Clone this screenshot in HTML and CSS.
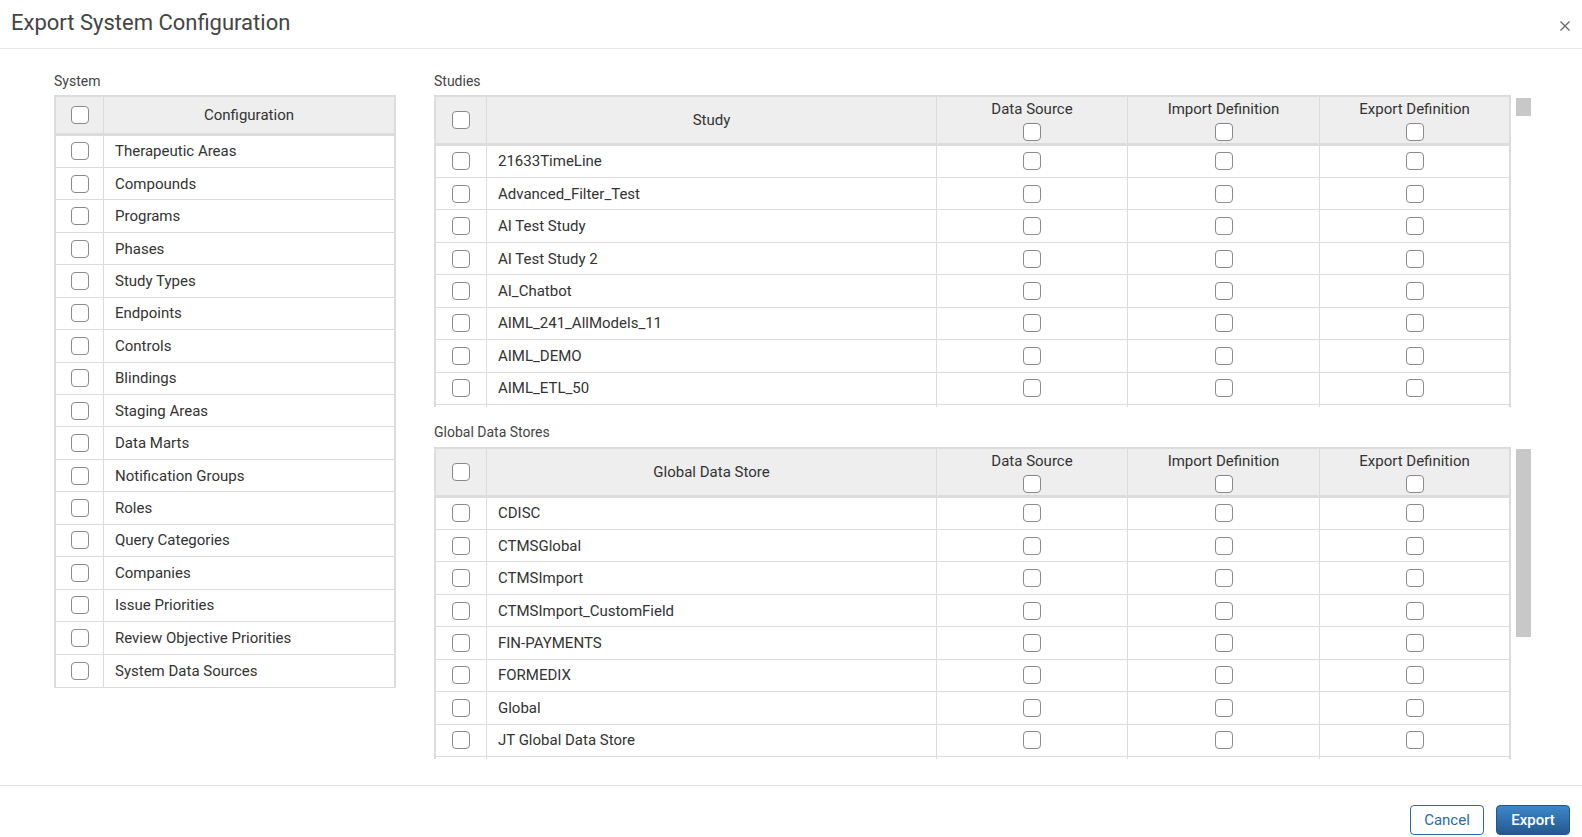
FILE: index.html
```html
<!DOCTYPE html>
<html lang="en">
<head>
    <meta charset="UTF-8">
    <meta name="viewport" content="width=device-width, initial-scale=1.0">
    <title>Export System Configuration</title>
    <link rel="stylesheet" href="styles.css">
</head>
<body>
    <div class="modal">
        <div class="modal-header">
            <h1 class="modal-title">Export System Configuration</h1>
            <button class="close-btn" title="Close">
                <svg width="10" height="10" viewBox="0 0 10 10"><path d="M0.5 0.5 L9.5 9.5 M9.5 0.5 L0.5 9.5" stroke="#666" stroke-width="1.3" fill="none"/></svg>
            </button>
        </div>

        <div class="modal-body">
            <!-- System column -->
            <div class="system-col">
                <div class="section-label">System</div>
                <div class="grid-table system-table">
                    <div class="grid-row head">
                        <div class="cell cb"><input type="checkbox"></div>
                        <div class="cell title">Configuration</div>
                    </div>
                    <div class="grid-row"><div class="cell cb"><input type="checkbox"></div><div class="cell name">Therapeutic Areas</div></div>
                    <div class="grid-row"><div class="cell cb"><input type="checkbox"></div><div class="cell name">Compounds</div></div>
                    <div class="grid-row"><div class="cell cb"><input type="checkbox"></div><div class="cell name">Programs</div></div>
                    <div class="grid-row"><div class="cell cb"><input type="checkbox"></div><div class="cell name">Phases</div></div>
                    <div class="grid-row"><div class="cell cb"><input type="checkbox"></div><div class="cell name">Study Types</div></div>
                    <div class="grid-row"><div class="cell cb"><input type="checkbox"></div><div class="cell name">Endpoints</div></div>
                    <div class="grid-row"><div class="cell cb"><input type="checkbox"></div><div class="cell name">Controls</div></div>
                    <div class="grid-row"><div class="cell cb"><input type="checkbox"></div><div class="cell name">Blindings</div></div>
                    <div class="grid-row"><div class="cell cb"><input type="checkbox"></div><div class="cell name">Staging Areas</div></div>
                    <div class="grid-row"><div class="cell cb"><input type="checkbox"></div><div class="cell name">Data Marts</div></div>
                    <div class="grid-row"><div class="cell cb"><input type="checkbox"></div><div class="cell name">Notification Groups</div></div>
                    <div class="grid-row"><div class="cell cb"><input type="checkbox"></div><div class="cell name">Roles</div></div>
                    <div class="grid-row"><div class="cell cb"><input type="checkbox"></div><div class="cell name">Query Categories</div></div>
                    <div class="grid-row"><div class="cell cb"><input type="checkbox"></div><div class="cell name">Companies</div></div>
                    <div class="grid-row"><div class="cell cb"><input type="checkbox"></div><div class="cell name">Issue Priorities</div></div>
                    <div class="grid-row"><div class="cell cb"><input type="checkbox"></div><div class="cell name">Review Objective Priorities</div></div>
                    <div class="grid-row"><div class="cell cb"><input type="checkbox"></div><div class="cell name">System Data Sources</div></div>
                </div>
            </div>

            <!-- Studies and global data stores -->
            <div class="data-col">
                <div class="section-label">Studies</div>
                <div class="scroll-area">
                    <div class="grid-table data-table">
                        <div class="grid-row head">
                            <div class="cell cb"><input type="checkbox"></div>
                            <div class="cell title">Study</div>
                            <div class="cell stacked"><span>Data Source</span><input type="checkbox"></div>
                            <div class="cell stacked"><span>Import Definition</span><input type="checkbox"></div>
                            <div class="cell stacked"><span>Export Definition</span><input type="checkbox"></div>
                        </div>
                        <div class="grid-row"><div class="cell cb"><input type="checkbox"></div><div class="cell name">21633TimeLine</div><div class="cell cb"><input type="checkbox"></div><div class="cell cb"><input type="checkbox"></div><div class="cell cb"><input type="checkbox"></div></div>
                        <div class="grid-row"><div class="cell cb"><input type="checkbox"></div><div class="cell name">Advanced_Filter_Test</div><div class="cell cb"><input type="checkbox"></div><div class="cell cb"><input type="checkbox"></div><div class="cell cb"><input type="checkbox"></div></div>
                        <div class="grid-row"><div class="cell cb"><input type="checkbox"></div><div class="cell name">AI Test Study</div><div class="cell cb"><input type="checkbox"></div><div class="cell cb"><input type="checkbox"></div><div class="cell cb"><input type="checkbox"></div></div>
                        <div class="grid-row"><div class="cell cb"><input type="checkbox"></div><div class="cell name">AI Test Study 2</div><div class="cell cb"><input type="checkbox"></div><div class="cell cb"><input type="checkbox"></div><div class="cell cb"><input type="checkbox"></div></div>
                        <div class="grid-row"><div class="cell cb"><input type="checkbox"></div><div class="cell name">AI_Chatbot</div><div class="cell cb"><input type="checkbox"></div><div class="cell cb"><input type="checkbox"></div><div class="cell cb"><input type="checkbox"></div></div>
                        <div class="grid-row"><div class="cell cb"><input type="checkbox"></div><div class="cell name">AIML_241_AllModels_11</div><div class="cell cb"><input type="checkbox"></div><div class="cell cb"><input type="checkbox"></div><div class="cell cb"><input type="checkbox"></div></div>
                        <div class="grid-row"><div class="cell cb"><input type="checkbox"></div><div class="cell name">AIML_DEMO</div><div class="cell cb"><input type="checkbox"></div><div class="cell cb"><input type="checkbox"></div><div class="cell cb"><input type="checkbox"></div></div>
                        <div class="grid-row"><div class="cell cb"><input type="checkbox"></div><div class="cell name">AIML_ETL_50</div><div class="cell cb"><input type="checkbox"></div><div class="cell cb"><input type="checkbox"></div><div class="cell cb"><input type="checkbox"></div></div>
                        <div class="grid-row"><div class="cell cb"></div><div class="cell name"></div><div class="cell cb"></div><div class="cell cb"></div><div class="cell cb"></div></div>
                    </div>
                    <div class="scrollbar"><div class="thumb studies-thumb"></div></div>
                </div>

                <div class="section-label gds-label">Global Data Stores</div>
                <div class="scroll-area">
                    <div class="grid-table data-table">
                        <div class="grid-row head">
                            <div class="cell cb"><input type="checkbox"></div>
                            <div class="cell title">Global Data Store</div>
                            <div class="cell stacked"><span>Data Source</span><input type="checkbox"></div>
                            <div class="cell stacked"><span>Import Definition</span><input type="checkbox"></div>
                            <div class="cell stacked"><span>Export Definition</span><input type="checkbox"></div>
                        </div>
                        <div class="grid-row"><div class="cell cb"><input type="checkbox"></div><div class="cell name">CDISC</div><div class="cell cb"><input type="checkbox"></div><div class="cell cb"><input type="checkbox"></div><div class="cell cb"><input type="checkbox"></div></div>
                        <div class="grid-row"><div class="cell cb"><input type="checkbox"></div><div class="cell name">CTMSGlobal</div><div class="cell cb"><input type="checkbox"></div><div class="cell cb"><input type="checkbox"></div><div class="cell cb"><input type="checkbox"></div></div>
                        <div class="grid-row"><div class="cell cb"><input type="checkbox"></div><div class="cell name">CTMSImport</div><div class="cell cb"><input type="checkbox"></div><div class="cell cb"><input type="checkbox"></div><div class="cell cb"><input type="checkbox"></div></div>
                        <div class="grid-row"><div class="cell cb"><input type="checkbox"></div><div class="cell name">CTMSImport_CustomField</div><div class="cell cb"><input type="checkbox"></div><div class="cell cb"><input type="checkbox"></div><div class="cell cb"><input type="checkbox"></div></div>
                        <div class="grid-row"><div class="cell cb"><input type="checkbox"></div><div class="cell name">FIN-PAYMENTS</div><div class="cell cb"><input type="checkbox"></div><div class="cell cb"><input type="checkbox"></div><div class="cell cb"><input type="checkbox"></div></div>
                        <div class="grid-row"><div class="cell cb"><input type="checkbox"></div><div class="cell name">FORMEDIX</div><div class="cell cb"><input type="checkbox"></div><div class="cell cb"><input type="checkbox"></div><div class="cell cb"><input type="checkbox"></div></div>
                        <div class="grid-row"><div class="cell cb"><input type="checkbox"></div><div class="cell name">Global</div><div class="cell cb"><input type="checkbox"></div><div class="cell cb"><input type="checkbox"></div><div class="cell cb"><input type="checkbox"></div></div>
                        <div class="grid-row"><div class="cell cb"><input type="checkbox"></div><div class="cell name">JT Global Data Store</div><div class="cell cb"><input type="checkbox"></div><div class="cell cb"><input type="checkbox"></div><div class="cell cb"><input type="checkbox"></div></div>
                        <div class="grid-row"><div class="cell cb"></div><div class="cell name"></div><div class="cell cb"></div><div class="cell cb"></div><div class="cell cb"></div></div>
                    </div>
                    <div class="scrollbar"><div class="thumb gds-thumb"></div></div>
                </div>
            </div>
        </div>

        <div class="modal-footer">
            <button class="btn btn-cancel">Cancel</button>
            <button class="btn btn-export">Export</button>
        </div>
    </div>
</body>
</html>
```

FILE: styles.css
```css
body {
    margin: 0;
    padding: 0;
    background-color: #fff;
    font-family: Roboto, "Liberation Sans", Arial, sans-serif;
    color: #333;
}
.modal {
    width: 1582px;
    height: 837px;
    display: flex;
    flex-direction: column;
    overflow: hidden;
}
.modal-header {
    height: 48px;
    border-bottom: 1px solid #e5e5e5;
    display: flex;
    align-items: center;
    justify-content: space-between;
    padding: 0 12px 0 11px;
    flex-shrink: 0;
}
.modal-title {
    margin: 0;
    font-size: 22px;
    font-weight: 400;
    color: #444;
    line-height: 26px;
    margin-top: -3px;
}
.close-btn {
    border: none;
    background: none;
    padding: 0;
    width: 10px;
    height: 10px;
    cursor: pointer;
    margin-top: 4px;
}
.close-btn svg {
    display: block;
}
.modal-body {
    height: 736px;
    box-sizing: border-box;
    display: flex;
    gap: 38px;
    padding: 24px 51px 0 54px;
    flex-shrink: 0;
}
.system-col {
    width: 342px;
    flex-shrink: 0;
}
.data-col {
    flex: 1;
}
.section-label {
    font-size: 14px;
    line-height: 16px;
    color: #444;
    margin-bottom: 6px;
}
.gds-label {
    margin-top: 17px;
    margin-bottom: 7px;
}

/* tables */
.grid-table {
    border: 2px solid #dcdcdc;
    border-bottom: none;
    box-sizing: border-box;
}
.system-table {
    border-bottom: 1px solid #dcdcdc;
}
.grid-row {
    display: grid;
    height: 32.45px;
    box-sizing: border-box;
    border-bottom: 1px solid #dcdcdc;
}
.system-table .grid-row {
    grid-template-columns: 48px 1fr;
}
.system-table .grid-row:last-child {
    border-bottom: none;
}
.data-table .grid-row {
    grid-template-columns: 51px 450px 191px 192px 1fr;
}
.grid-row.head {
    background-color: #eeeeee;
    border-bottom: 3px solid #dcdcdc;
}
.system-table .grid-row.head {
    height: 38.5px;
}
.data-table .grid-row.head {
    height: 48.5px;
}
.cell {
    border-right: 1px solid #dcdcdc;
    display: flex;
    align-items: center;
    font-size: 15px;
    min-width: 0;
}
.cell:last-child {
    border-right: none;
}
.cell.cb {
    justify-content: center;
}
.cell.name {
    padding-left: 11px;
    white-space: nowrap;
}
.cell.title {
    justify-content: center;
}
.cell.stacked {
    flex-direction: column;
    justify-content: flex-start;
    padding-top: 4px;
    gap: 5px;
    line-height: 17px;
}
.data-table {
    width: 1077px;
    height: 312px;
    overflow: hidden;
    flex-shrink: 0;
}
.scroll-area {
    display: flex;
    gap: 5px;
}
.scrollbar {
    width: 15px;
}
.thumb {
    background-color: #c8c8c8;
}
.studies-thumb {
    margin-top: 3px;
    height: 18px;
}
.gds-thumb {
    margin-top: 2px;
    height: 188px;
}

input[type="checkbox"] {
    appearance: none;
    -webkit-appearance: none;
    width: 18px;
    height: 18px;
    margin: 0;
    border: 1.5px solid #8a8a8a;
    border-radius: 4px;
    background-color: #fff;
    box-sizing: border-box;
    cursor: pointer;
    flex-shrink: 0;
}

/* footer */
.modal-footer {
    flex: 1;
    border-top: 1px solid #e5e5e5;
    display: flex;
    justify-content: flex-end;
    align-items: flex-start;
    gap: 12px;
    padding: 19px 12px 0 0;
}
.btn {
    width: 74px;
    height: 30px;
    border-radius: 4px;
    font-family: Roboto, "Liberation Sans", Arial, sans-serif;
    font-size: 15px;
    cursor: pointer;
    box-sizing: border-box;
}
.btn-cancel {
    background-color: #fff;
    border: 1px solid #2a6aad;
    color: #2a6aad;
}
.btn-export {
    border: 1px solid #22558a;
    color: #fff;
    font-weight: 500;
    background: linear-gradient(to bottom, #3d87c9, #24598f);
}
```
